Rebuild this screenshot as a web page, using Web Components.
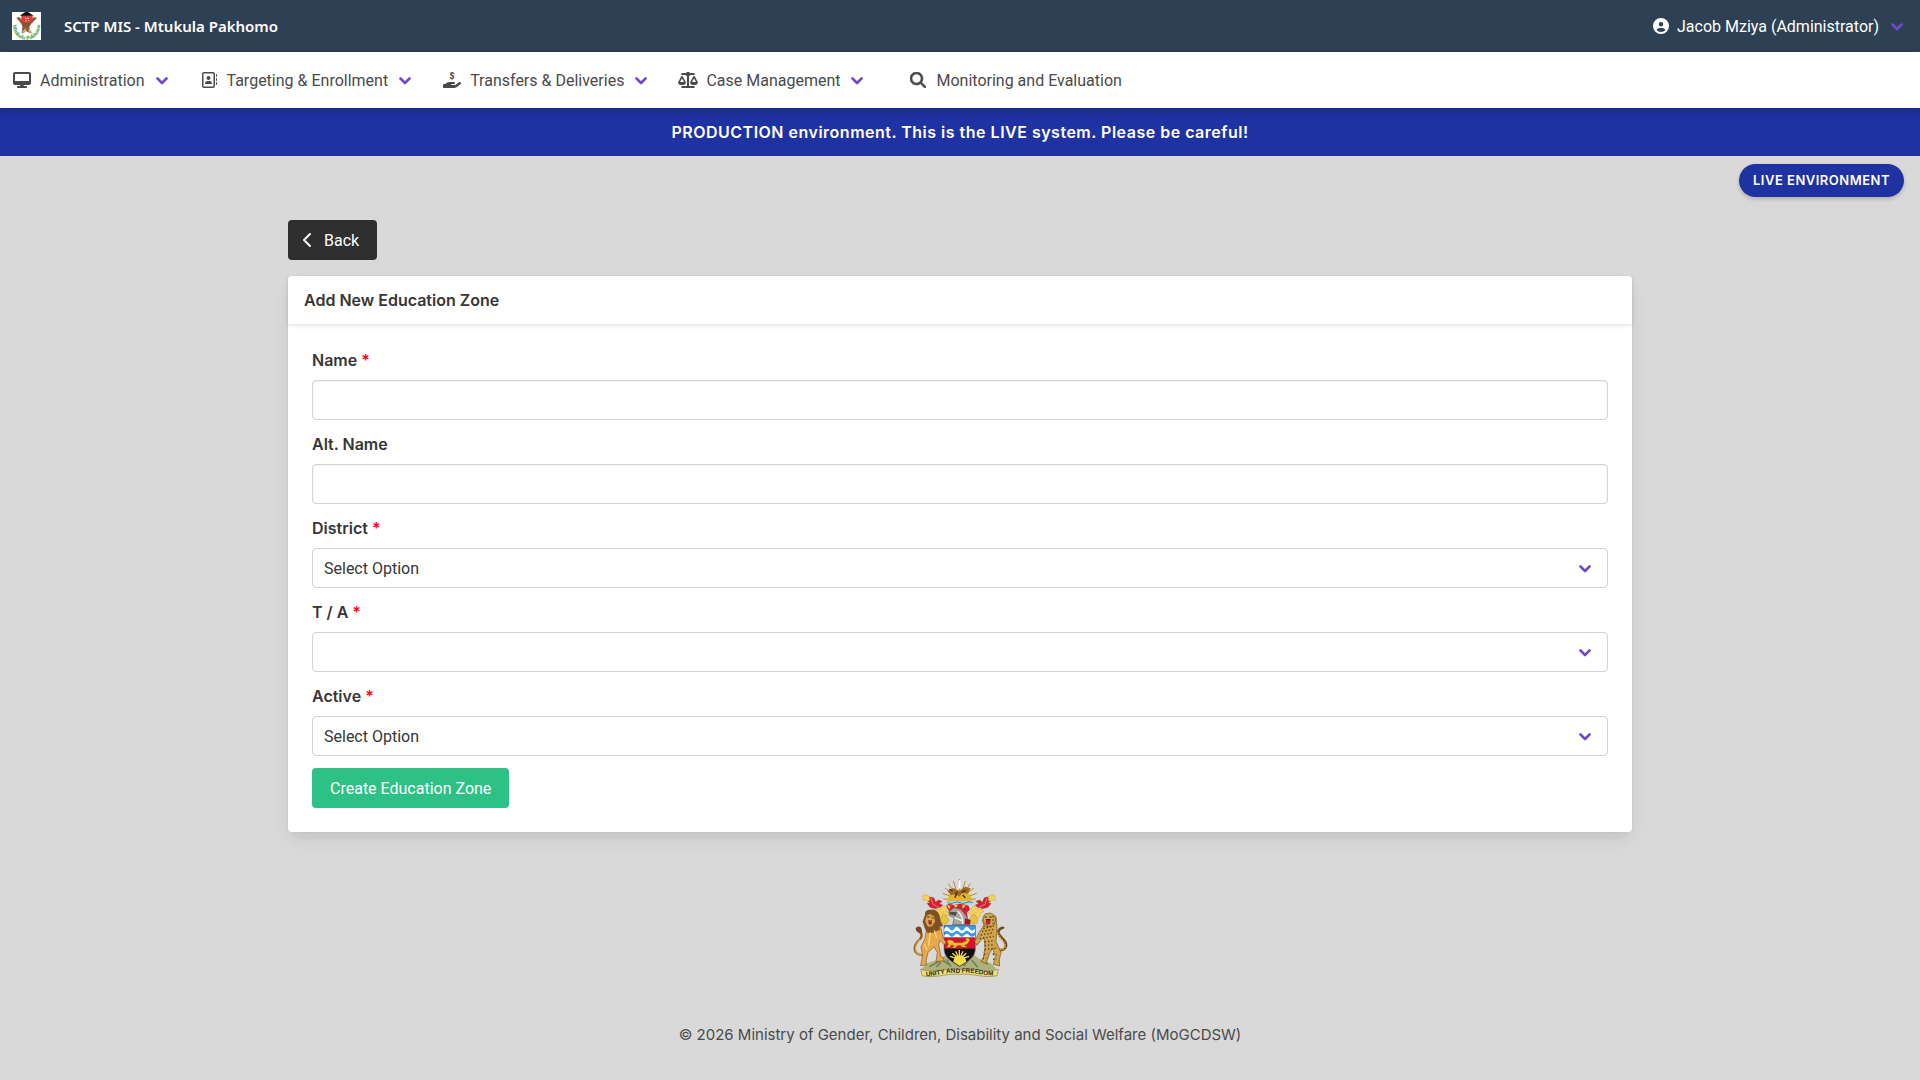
<!DOCTYPE html>
<html lang="en">
<head>
<meta charset="utf-8">
<meta name="viewport" content="width=device-width, initial-scale=1">
<title>SCTP MIS - Add New Education Zone</title>
<style>
  html, body {
    margin: 0;
    min-height: 100vh;
    background: #d9d9d9;
  }
  body {
    --heading-font: Inter, "Liberation Sans", sans-serif;
    font: 16px/24px Roboto, "Liberation Sans", sans-serif;
    color: #4a4a4a;
  }
</style>
</head>
<body>
<mis-page>
  <mis-topbar slot="header" user="Jacob Mziya (Administrator)">SCTP MIS - Mtukula Pakhomo</mis-topbar>
  <mis-nav slot="header">
    <mis-nav-item icon="desktop" dropdown>Administration</mis-nav-item>
    <mis-nav-item icon="book" dropdown>Targeting &amp; Enrollment</mis-nav-item>
    <mis-nav-item icon="hand" dropdown>Transfers &amp; Deliveries</mis-nav-item>
    <mis-nav-item icon="scale" dropdown>Case Management</mis-nav-item>
    <mis-nav-item icon="search">Monitoring and Evaluation</mis-nav-item>
  </mis-nav>
  <mis-banner slot="header">PRODUCTION environment. This is the LIVE system. Please be careful!</mis-banner>
  <mis-badge slot="header">LIVE ENVIRONMENT</mis-badge>

  <mis-button kind="dark" icon="back">Back</mis-button>
  <mis-card heading="Add New Education Zone">
    <mis-field label="Name" required></mis-field>
    <mis-field label="Alt. Name"></mis-field>
    <mis-field label="District" type="select" option="Select Option" required></mis-field>
    <mis-field label="T / A" type="select" required></mis-field>
    <mis-field label="Active" type="select" option="Select Option" required></mis-field>
    <mis-button kind="success">Create Education Zone</mis-button>
  </mis-card>

  <mis-footer slot="footer">© 2026 Ministry of Gender, Children, Disability and Social Welfare (MoGCDSW)</mis-footer>
</mis-page>

<script>
const icons = {
  desktop: `<svg viewBox="0 0 576 512" width="18" height="16"><path d="M64 0C28.7 0 0 28.7 0 64V352c0 35.3 28.7 64 64 64H240l-10.7 32H160c-17.7 0-32 14.3-32 32s14.3 32 32 32H416c17.7 0 32-14.3 32-32s-14.3-32-32-32H346.7L336 416H512c35.3 0 64-28.7 64-64V64c0-35.3-28.7-64-64-64H64zM512 64V288H64V64H512z"/></svg>`,
  book: `<svg viewBox="0 0 512 512" width="16" height="16"><path d="M384 48c8.8 0 16 7.2 16 16V448c0 8.8-7.2 16-16 16H96c-8.8 0-16-7.2-16-16V64c0-8.8 7.2-16 16-16H384zM96 0C60.7 0 32 28.7 32 64V448c0 35.3 28.7 64 64 64H384c35.3 0 64-28.7 64-64V64c0-35.3-28.7-64-64-64H96zM240 256a64 64 0 1 0 0-128 64 64 0 1 0 0 128zm-32 32c-44.2 0-80 35.8-80 80c0 8.8 7.2 16 16 16H336c8.8 0 16-7.2 16-16c0-44.2-35.8-80-80-80H208zM512 80c0-8.8-7.2-16-16-16s-16 7.2-16 16v64c0 8.8 7.2 16 16 16s16-7.2 16-16V80zM496 192c-8.8 0-16 7.2-16 16v64c0 8.8 7.2 16 16 16s16-7.2 16-16V208c0-8.8-7.2-16-16-16zm16 144c0-8.8-7.2-16-16-16s-16 7.2-16 16v64c0 8.8 7.2 16 16 16s16-7.2 16-16V336z"/></svg>`,
  hand: `<svg viewBox="0 0 576 512" width="18" height="16"><path d="M568.2 336.3c13.1 17.8 9.3 42.8-8.5 55.9L433.1 485.5c-23.4 17.2-51.6 26.5-80.7 26.5H32c-17.7 0-32-14.3-32-32V416c0-17.7 14.3-32 32-32H68.8l44.9-36c22.7-18.2 50.9-28 80-28H352c17.7 0 32 14.3 32 32s-14.3 32-32 32H272c-8.8 0-16 7.2-16 16s7.2 16 16 16H392.6l119.7-88.2c17.8-13.1 42.8-9.3 55.9 8.5z"/><text x="288" y="225" text-anchor="middle" font-family="Roboto" font-weight="900" font-size="270">$</text></svg>`,
  scale: `<svg viewBox="0 0 640 512" width="20" height="16"><path d="M136 32h120a72 72 0 0 1 128 0h120c42 0 42 64 0 64H392c-8 18-22 33-40 41v311h152c42 0 42 64 0 64H136c-42 0-42-64 0-64h152V137c-18-8-32-23-40-41H136c-42 0-42-64 0-64z"/><path fill-rule="evenodd" d="M128 128c12 0 22 6 28 16l98 182c6 54-54 90-126 90S-4 380 2 326l98-182c6-10 16-16 28-16zm0 82L62 320h132zM512 128c12 0 22 6 28 16l98 182c6 54-54 90-126 90s-132-36-126-90l98-182c6-10 16-16 28-16zm0 82l-66 110h132z"/></svg>`,
  search: `<svg viewBox="0 0 512 512" width="16" height="16"><path d="M416 208c0 45.9-14.9 88.3-40 122.7L502.6 457.4c12.5 12.5 12.5 32.8 0 45.3s-32.8 12.5-45.3 0L330.7 376c-34.4 25.2-76.8 40-122.7 40C93.1 416 0 322.9 0 208S93.1 0 208 0S416 93.1 416 208zM208 352a144 144 0 1 0 0-288 144 144 0 1 0 0 288z" stroke="currentColor" stroke-width="20"/></svg>`,
  user: `<svg viewBox="0 0 512 512" width="16" height="16"><path d="M399 384.2C376.9 345.8 335.4 320 288 320H224c-47.4 0-88.9 25.8-111 64.2c35.2 39.2 86.2 63.8 143 63.8s107.8-24.7 143-63.8zM0 256a256 256 0 1 1 512 0A256 256 0 1 1 0 256zm256 16a72 72 0 1 0 0-144 72 72 0 1 0 0 144z"/></svg>`,
  back: `<svg viewBox="0 0 16 16" width="16" height="16"><path d="M11 2L5 8l6 6" fill="none" stroke="currentColor" stroke-width="2" stroke-linecap="round" stroke-linejoin="round"/></svg>`,
};

const chevron = `<svg class="chevron" viewBox="0 0 12 8" width="12" height="8" aria-hidden="true"><path d="M1.5 1.5L6 6l4.5-4.5" fill="none" stroke="#7048c8" stroke-width="2.6" stroke-linecap="round" stroke-linejoin="round"/></svg>`;

const logo = `<svg viewBox="0 0 87 84" width="29" height="28" role="img" aria-label="Mtukula Pakhomo">
  <rect width="87" height="84" fill="#fff"/>
  <path d="M13 17l8-2 12 11h20l13-11 9 3-17 17-6 9 2 20-13-8-12 9 2-22-4-9z" fill="#8a5a33"/>
  <path d="M31 58l9-10 3 9-10 8zM48 51l10 5 2 10-9-5z" fill="#c9a78a"/>
  <path d="M28 10h34v17l-17 7-17-7z" fill="#e63c38"/>
  <path d="M23 11L40 0h8l17 11z" fill="#15100f"/>
  <path d="M39 17h4v4h-4zm7 0h5v4h-5zm-6 7h4v4h-4zm8 0h3v3h-3z" fill="#f6c9c4"/>
  <path d="M35 34h19l-3 7H38z" fill="#805331"/>
  <path id="arc" d="M2 38C4 98 83 98 85 38" fill="none"/>
  <text font-family="Liberation Serif" font-size="17" font-weight="700" fill="#2f9a45"><textPath href="#arc" startOffset="50%" text-anchor="middle">Mtukula Pakhomo</textPath></text>
</svg>`;

// Malawi coat of arms
const emblem = `<svg viewBox="66 57 288 300" width="96" height="100" role="img" aria-label="Coat of arms of Malawi">
  <g stroke="#b98d25" stroke-width="3">
    <path d="M208 122V60M208 122L190 66M208 122L226 66M208 122L175 74M208 122L241 74M208 122L165 87M208 122L252 87M208 122L158 103M208 122L260 103M208 122L160 120M208 122L258 120"/>
  </g>
  <path d="M172 128c2-46 70-48 75 0z" fill="#e2b52e"/>
  <path d="M207 64h4v23l-6 3z" fill="#fff"/>
  <path d="M172 95l18-8 17 9 18-13 17 5-9 16-16-2-9 11-11-9-15 5z" fill="#a3681f"/>
  <path d="M178 91l10 5m15 2l-8 10m32-15l-12 8m3 7l8 8M194 116l7-12" stroke="#4b3218" stroke-width="4"/>
  <path d="M165 125l15 3 14-3 14 3 14-3 15 3 22-4-9 12-41 4-37-4z" fill="#b9d5ed"/>
  <path d="M173 131q10 5 19 0t18 0 18 0 20 0" stroke="#3a80b8" stroke-width="3" fill="none"/>
  <g id="mantle">
    <path d="M137 149l-17-4-9-12 9-1-9-8 10-10 10 2 6 14 8-7 11 4-8 7 10 4-6 7-9 1z" fill="#d3232e" stroke="#9d1421"/>
    <path d="M97 111l10-4 11 4 1 13-8 4-6-6-8 2 4-7zM140 151l16-2 5-10 10 8-4 11 12 2-7 10-13-1-5 8-10-4-3-13-9-2z" fill="#f3d351" stroke="#b8922d"/>
    <path d="M150 182l10-16 12 8 5 10-6 10-18-1z" fill="#e9c33d" stroke="#a37b21"/>
    <path d="M123 118l6 18 17 9M151 158l18 9" fill="none" stroke="#f7a4a0" stroke-width="2"/>
  </g>
  <use href="#mantle" transform="matrix(-1 0 0 1 414 0)"/>
  <path d="M168 139l9-5 15 4 17-4 17 3 10 3 4 12-9 8 2 16-9 14-20-26-25-2z" fill="#d61f2c"/>
  <path d="M170 138l12 2-4 11zM191 138l14-1-8 10zM217 137l11 3-11 9z" fill="#efca3e"/>
  <path d="M177 157l15-11 21 5 14 18 9 15-14 13h-34l5-21-15-6z" fill="#aaa69f" stroke="#5b5653" stroke-width="2"/>
  <path d="M179 158l22 2-4 11-18-5z" fill="#4d4b4c"/>
  <path d="M203 157q17 15 15 38M193 176l23 9" stroke="#f4f2ee" stroke-width="4" fill="none"/>
  <path d="M225 178l17 5-2 14h-16z" fill="#a41625"/>
  <path d="M92 332l20-20 39-12 23-17 35 22 35-23 24 17 38 16 14 16-30 9-81 2-83-2z" fill="#aeb17b"/>
  <path d="M118 323l37-21 21 15m69-14l18 22m13-22l19 13M139 324l13-13M169 301l14 22m53-22l-15 21" stroke="#6d8655" stroke-width="5" fill="none"/>
  <path d="M162 199h94v70c0 27-23 39-47 54-24-15-47-27-47-54z" fill="#111" stroke="#777" stroke-width="2"/>
  <path d="M163 200h92v36h-92z" fill="#3b9de8"/>
  <path d="M163 209q7-11 15 0t15 0 15 0 15 0 15 0 17 0v10q-9 8-17 0t-15 0-15 0-15 0-15 0-15 0zM163 229q7-9 15 0t15 0 15 0 15 0 15 0 17 0v7h-92z" fill="#fff"/>
  <path d="M163 235h92v34h-92z" fill="#d3162d"/>
  <path d="M176 242l13 3 4 6h23l14-6-4-6 9-2 5 6-9 13-8 2 9 6-13 1-9-6-11 2-1 6h-13l8-6-8-4-7 9-8-2 6-8-5-8z" fill="#edbf32" stroke="#9c5c14"/>
  <path d="M190 308l2-8 6-10h21l8 10 2 8-20 13z" fill="#f6db49"/>
  <path d="M208 301V273M208 301l-11-24M208 301l11-24M208 301l-21-18M208 301l21-18M208 301l-28-9M208 301l29-9" stroke="#f6db49" stroke-width="4"/>
  <path d="M98 289c-32-4-29-30-8-49 9-10 5-23-8-28" fill="none" stroke="#8f5d1f" stroke-width="7"/>
  <path d="M98 289c-29-5-26-29-8-48" fill="none" stroke="#dca33c" stroke-width="4"/>
  <path d="M77 207q14-11 19 5l-1 12q-8 2-17-10z" fill="#784226"/>
  <path d="M112 196l-7 42-12 26 5 24-6 32 18-2-2-12 6-25 18-18 10 18-4 26 25-1-4-11-6-1-7-37 4-13 13 13 5-7-9-14-7-31-17-20z" fill="#e5a94a" stroke="#835624" stroke-width="2"/>
  <path d="M105 167q-1-16 17-15 18-2 26 15l5 22 7 12-12 2 2 9-21 9-17 1-8-15-6-19z" fill="#805025"/>
  <path d="M109 171l10-6 13 7 3 16-9 14-12 1-8-15z" fill="#dfa44c"/>
  <path d="M111 174h8m6 1l6 3M114 186h12" stroke="#392c21" stroke-width="3"/>
  <path d="M115 188h11l-2 9-8-1z" fill="#a92727"/>
  <path d="M121 220l-5 40M133 214l7 23M102 255l10 18" stroke="#ffd47a" stroke-width="4" fill="none"/>
  <path d="M319 271c26 8 34-8 26-23-8-13-22-20-20-30 2-12 14-10 16-14" fill="none" stroke="#704c1b" stroke-width="8"/>
  <path d="M321 270c23 6 28-5 22-17-7-14-23-24-19-35" fill="none" stroke="#d7a244" stroke-width="5" stroke-dasharray="5 3"/>
  <path d="M281 177l-4 7 5 15-15 22-13 27 7 11 14-18 7-5 3 29-5 32-7 10 15 7 10-30 10-17 8 26-6 23 19 5-1-20 5-21-15-32 3-41-3-33-13-8-15-1z" fill="#d3a34b" stroke="#6e501e" stroke-width="2"/>
  <path d="M280 173l5-8 16-3 13 7 3 14-7 17-14 3-11-8-6-12z" fill="#d4a84f" stroke="#704e20" stroke-width="2"/>
  <path d="M287 182l15 1-2 13-11 1z" fill="#b5272b"/>
  <path d="M284 174h6m8 0h7M288 182h14" stroke="#201c16" stroke-width="3"/>
  <path d="M280 209l30-8M276 218l34-7M272 228l40-7M269 239l42-7M284 249l28-4M284 260l30-3M284 272l36-5M282 287l10-4m16 2l12 2M278 299l11-2m20 4l11-1M309 171v23M280 202l28 2" stroke="#4c3a1c" stroke-width="4" stroke-dasharray="4 6" fill="none"/>
  <path d="M92 331c36 13 77-4 117 0 39-4 78 12 116 0l-4 19c-38 9-73-8-112-4-41-4-76 14-112 4z" fill="#ebe083" stroke="#8f812d" stroke-width="2"/>
  <path id="motto" d="M96 351c35 4 72-14 113-9 40-5 76 11 113 7" fill="none"/>
  <text font-family="Liberation Sans" font-size="19" font-weight="700" fill="#292815"><textPath href="#motto" startOffset="50%" text-anchor="middle">UNITY AND FREEDOM</textPath></text>
</svg>`;

class MisPage extends HTMLElement {
  constructor() {
    super();
    this.attachShadow({mode: 'open'});
    this.shadowRoot.innerHTML = `
    <style>
      :host { display: flex; flex-direction: column; min-height: 100vh; }
      header { position: relative; }
      main {
        box-sizing: border-box;
        width: 70%;
        margin: 64px auto 0;
        display: flex;
        flex-direction: column;
        align-items: stretch;
        gap: 16px;
      }
    </style>
    <header><slot name="header"></slot></header>
    <main><slot></slot></main>
    <slot name="footer"></slot>`;
  }
}
customElements.define('mis-page', MisPage);

class MisTopbar extends HTMLElement {
  connectedCallback() {
    this.attachShadow({mode: 'open'});
    this.shadowRoot.innerHTML = `
    <style>
      :host {
        display: flex;
        align-items: center;
        justify-content: space-between;
        height: 52px;
        padding: 0 17px 0 12px;
        background: #2e4053;
        color: #fff;
      }
      a { display: flex; align-items: center; gap: 23px; color: inherit; text-decoration: none; }
      .title { font: 600 15px/24px "Noto Sans", sans-serif; }
      button {
        display: flex;
        align-items: center;
        gap: 8px;
        padding: 0;
        border: 0;
        background: none;
        color: inherit;
        font: inherit;
      }
      .icon { display: flex; fill: currentColor; }
      .name { padding-top: 2px; }
      .chevron { margin: 2px 0 0 4px; }
    </style>
    <a href="#">${logo}<span class="title"><slot></slot></span></a>
    <button type="button"><span class="icon">${icons.user}</span><span class="name">${this.getAttribute('user')}</span>${chevron}</button>`;
  }
}
customElements.define('mis-topbar', MisTopbar);

class MisNav extends HTMLElement {
  constructor() {
    super();
    this.attachShadow({mode: 'open'});
    this.shadowRoot.innerHTML = `
    <style>
      :host { display: block; position: relative; background: #fff; box-shadow: 0 2px 8px rgba(10, 10, 10, .3); }
      nav { display: flex; height: 56px; }
    </style>
    <nav aria-label="Main"><slot></slot></nav>`;
  }
}
customElements.define('mis-nav', MisNav);

class MisNavItem extends HTMLElement {
  connectedCallback() {
    const dropdown = this.hasAttribute('dropdown');
    this.attachShadow({mode: 'open'});
    this.shadowRoot.innerHTML = `
    <style>
      :host { display: flex; }
      :host(:not([dropdown])) { margin-left: 14px; }
      a {
        display: flex;
        align-items: center;
        padding: 0 19px 0 10px;
        color: #4a4a4a;
        text-decoration: none;
      }
      .icon { display: flex; justify-content: center; width: 24px; margin-right: 6px; fill: currentColor; }
      .text { padding-top: 2px; }
      .chevron { margin: 2px 0 0 11px; }
    </style>
    <a href="#"><span class="icon" aria-hidden="true">${icons[this.getAttribute('icon')]}</span><span class="text"><slot></slot></span>${dropdown ? chevron : ''}</a>`;
  }
}
customElements.define('mis-nav-item', MisNavItem);

class MisBanner extends HTMLElement {
  constructor() {
    super();
    this.attachShadow({mode: 'open'});
    this.shadowRoot.innerHTML = `
    <style>
      :host {
        display: block;
        padding: 12px;
        background: #1f32a2;
        color: #fff;
        font-family: var(--heading-font);
        font-weight: 600;
        letter-spacing: .5px;
        text-align: center;
      }
    </style>
    <slot></slot>`;
  }
}
customElements.define('mis-banner', MisBanner);

// floats under the banner, on top of the page
class MisBadge extends HTMLElement {
  constructor() {
    super();
    this.attachShadow({mode: 'open'});
    this.shadowRoot.innerHTML = `
    <style>
      :host {
        position: absolute;
        top: 164px;
        right: 16px;
        padding: 6px 14px;
        border-radius: 20px;
        background: #1f32a2;
        box-shadow: 0 2px 4px rgba(0, 0, 0, .2);
        color: #fff;
        font-family: var(--heading-font);
        font-size: 13px;
        line-height: 21px;
        font-weight: 600;
        letter-spacing: .5px;
      }
    </style>
    <slot></slot>`;
  }
}
customElements.define('mis-badge', MisBadge);

class MisButton extends HTMLElement {
  connectedCallback() {
    const icon = this.getAttribute('icon');
    this.attachShadow({mode: 'open'});
    this.shadowRoot.innerHTML = `
    <style>
      :host { display: flex; }
      button {
        display: flex;
        align-items: center;
        gap: 9px;
        height: 40px;
        padding: 0 18px;
        border: 0;
        border-radius: 4px;
        background: #2dc186;
        color: #fff;
        font: inherit;
        cursor: pointer;
      }
      :host([kind="dark"]) button { padding-left: 11px; background: #2f2f2f; }
      span { padding-top: 2px; }
      svg { display: block; }
    </style>
    <button type="button">${icon ? icons[icon] : ''}<span><slot></slot></span></button>`;
  }
}
customElements.define('mis-button', MisButton);

class MisCard extends HTMLElement {
  connectedCallback() {
    this.attachShadow({mode: 'open'});
    this.shadowRoot.innerHTML = `
    <style>
      :host {
        display: block;
        border-radius: 4px;
        background: #fff;
        box-shadow: 0 8px 16px -2px rgba(10, 10, 10, .1), 0 0 0 1px rgba(10, 10, 10, .02);
        color: #363636;
      }
      header { padding: 12px 16px; box-shadow: 0 2px 4px rgba(10, 10, 10, .1); }
      h1 { margin: 0; font: 600 16px/24px var(--heading-font); }
      form { display: flex; flex-direction: column; gap: 12px; padding: 24px; }
    </style>
    <header><h1>${this.getAttribute('heading')}</h1></header>
    <form><slot></slot></form>`;
  }
}
customElements.define('mis-card', MisCard);

class MisField extends HTMLElement {
  connectedCallback() {
    this.attachShadow({mode: 'open'});
    this.shadowRoot.innerHTML = `
    <style>
      :host { display: flex; flex-direction: column; gap: 8px; }
      label { font-family: var(--heading-font); font-weight: 600; }
      label span { color: #ff0020; }
      .control { display: flex; position: relative; }
      input, select {
        box-sizing: border-box;
        width: 100%;
        height: 40px;
        padding: 2px 11px 0;
        border: 1px solid #d3d3d3;
        border-radius: 4px;
        background: #fff;
        color: #363636;
        font: inherit;
        appearance: none;
      }
      input { box-shadow: inset 0 1px 2px rgba(10, 10, 10, .05); }
      .chevron { position: absolute; right: 17px; top: 17px; pointer-events: none; }
    </style>
    <label for="control">${this.getAttribute('label')}${this.hasAttribute('required') ? ' <span>*</span>' : ''}</label>
    <div class="control">${this.renderControl()}</div>`;
  }
  renderControl() {
    if (this.getAttribute('type') === 'select') {
      const option = this.getAttribute('option');
      return `<select id="control">${option ? `<option>${option}</option>` : ''}</select>${chevron}`;
    }
    return `<input id="control" type="text">`;
  }
}
customElements.define('mis-field', MisField);

class MisFooter extends HTMLElement {
  constructor() {
    super();
    this.attachShadow({mode: 'open'});
    this.shadowRoot.innerHTML = `
    <style>
      :host { display: block; padding-top: 46px; }
      footer { display: flex; flex-direction: column; align-items: center; gap: 45px; }
      p { margin: 0; font: 15px/24px var(--heading-font); }
      svg { display: block; }
    </style>
    <footer>${emblem}<p><slot></slot></p></footer>`;
  }
}
customElements.define('mis-footer', MisFooter);
</script>
</body>
</html>
